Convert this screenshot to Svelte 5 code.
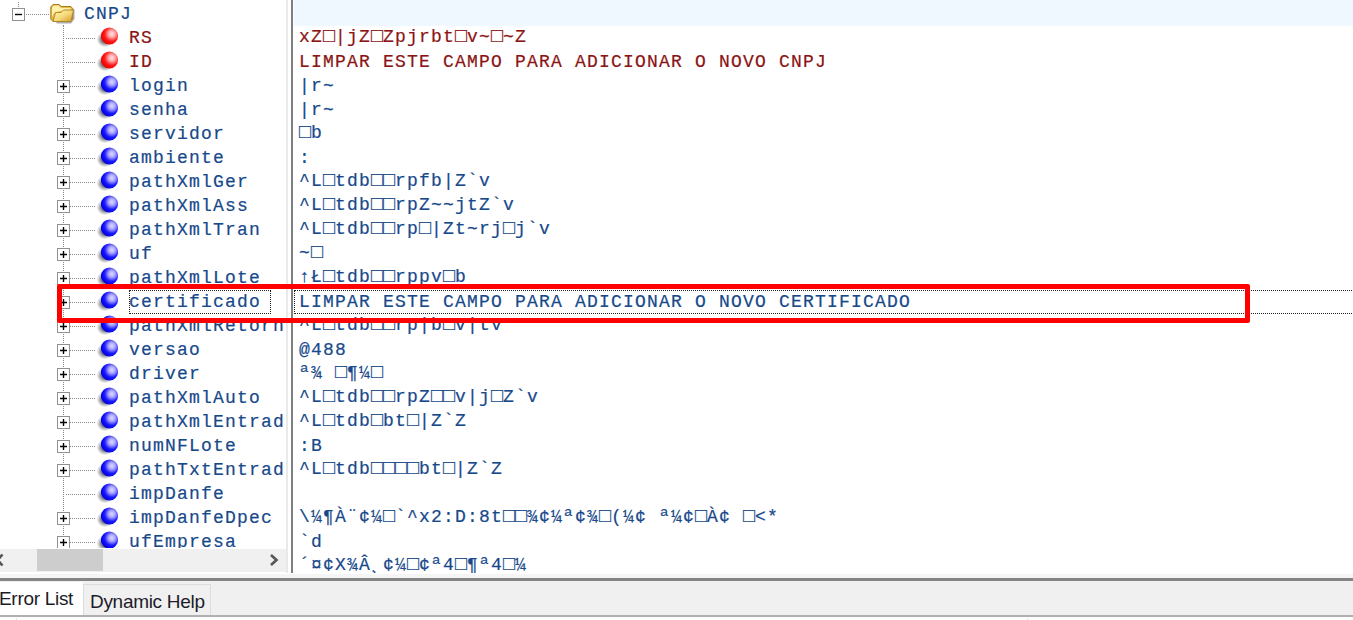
<script>
  // red = plain values, leaf = node without an expand box
  const rows = [
    { name: "RS", value: "xZ□|jZ□Zpjrbt□v~□~Z", red: true, leaf: true },
    { name: "ID", value: "LIMPAR ESTE CAMPO PARA ADICIONAR O NOVO CNPJ", red: true, leaf: true },
    { name: "login", value: "|r~" },
    { name: "senha", value: "|r~" },
    { name: "servidor", value: "□b" },
    { name: "ambiente", value: ":" },
    { name: "pathXmlGer", value: "^L□tdb□□rpfb|Z`v" },
    { name: "pathXmlAss", value: "^L□tdb□□rpZ~~jtZ`v" },
    { name: "pathXmlTran", value: "^L□tdb□□rp□|Zt~rj□j`v" },
    { name: "uf", value: "~□" },
    { name: "pathXmlLote", value: "↑Ł□tdb□□rppv□b" },
    { name: "certificado", value: "LIMPAR ESTE CAMPO PARA ADICIONAR O NOVO CERTIFICADO", selected: true },
    { name: "pathXmlRetorn", value: "^L□tdb□□rp|b□v|tv" },
    { name: "versao", value: "@488" },
    { name: "driver", value: "ª¾ □¶¼□" },
    { name: "pathXmlAuto", value: "^L□tdb□□rpZ□□v|j□Z`v" },
    { name: "pathXmlEntrad", value: "^L□tdb□bt□|Z`Z" },
    { name: "numNFLote", value: ":B" },
    { name: "pathTxtEntrad", value: "^L□tdb□□□□bt□|Z`Z" },
    { name: "impDanfe", value: "", leaf: true },
    { name: "impDanfeDpec", value: "\\¼¶À¨¢¼□`^x2:D:8t□□¾¢¼ª¢¾□(¼¢ ª¼¢□À¢ □<*" },
    { name: "ufEmpresa", value: "`d" }
  ];
  const lastValue = "´¤¢X¾Â¸¢¼□¢ª4□¶ª4□¼";
</script>

{#snippet chars(text)}{#each text.split(/(□)/) as part}{#if part === "□"}<span class="box">□</span>{:else}{part}{/if}{/each}{/snippet}

<svg class="defs" width="0" height="0">
  <defs>
    <radialGradient id="blueBall" cx="0.64" cy="0.38" r="0.65">
      <stop offset="0" stop-color="#dcdaff" />
      <stop offset="0.3" stop-color="#aaa6ff" />
      <stop offset="0.66" stop-color="#1c18ff" />
      <stop offset="1" stop-color="#0000e4" />
    </radialGradient>
    <radialGradient id="redBall" cx="0.64" cy="0.38" r="0.65">
      <stop offset="0" stop-color="#ffe2e2" />
      <stop offset="0.3" stop-color="#ffa8a8" />
      <stop offset="0.66" stop-color="#ff1818" />
      <stop offset="1" stop-color="#f00000" />
    </radialGradient>
    <radialGradient id="ballShadow">
      <stop offset="0.45" stop-color="#555" stop-opacity="0.75" />
      <stop offset="1" stop-color="#888" stop-opacity="0" />
    </radialGradient>
    <linearGradient id="folderFront" x1="0" y1="0" x2="1" y2="1">
      <stop offset="0" stop-color="#fff6bd" />
      <stop offset="0.5" stop-color="#f6db7c" />
      <stop offset="1" stop-color="#d39c22" />
    </linearGradient>
  </defs>
</svg>

<div class="window">
  <div class="panes">
    <div class="tree">
      <div class="nodes">
        <div class="row">
          <svg width="84" height="24">
            <path class="dots" d="M18.500 -2V5M26 12.500H50M63.500 23V24" />
            <rect class="toggle" x="12.500" y="6.500" width="12" height="12" />
            <path class="sign" d="M15 12.500H22" />
            <path d="M54 18L57 21.500H71L74.500 17V8L73 6V17L71 19Z" fill="#777" opacity="0.6" />
            <path d="M50.800 17V5L53 2.500H59L61.500 4.500H71L72.500 6.500V17L70 19.500H53Z" fill="#e2bb4b" stroke="#a77a20" />
            <path d="M52 15V5.500L54 3.500H58.500L61 6H70.500V9H60L54 11Z" fill="#fff1aa" />
            <path d="M53 19.500L55.500 10.500H61L63.500 8H73.500L71 19.500Z" fill="url(#folderFront)" stroke="#b48624" />
          </svg>
          <span class="name">CNPJ</span>
        </div>
        {#each rows as row}
          <div class="row" class:red={row.red}>
            <svg width="129" height="24">
              <path class="dots" d="M63.500 0V24M66 12.500H95" />
              {#if !row.leaf}
                <rect class="toggle" x="57.500" y="6.500" width="12" height="12" />
                <path class="sign" d="M60 12.500H67M63.500 9V16" />
              {/if}
              <ellipse cx="105" cy="13.500" rx="8.500" ry="8" fill="url(#ballShadow)" />
              <circle cx="109.500" cy="10" r="8.600" fill={row.red ? "url(#redBall)" : "url(#blueBall)"} />
            </svg>
            <span class="name" class:focus={row.selected}>{row.name}</span>
          </div>
        {/each}
      </div>
      <div class="scrollbar">
        <svg width="37" height="22"><path class="arrow" d="M2.500 5.500L-2.500 11L2.500 16.500" /></svg>
        <div class="thumb"></div>
        <svg width="183" height="22"><path class="arrow" d="M168 6L173.500 11L168 16" /></svg>
      </div>
    </div>
    <div class="splitter"></div>
    <div class="values">
      <div class="head"></div>
      {#each rows as row}
        <div class="value" class:red={row.red} class:selected={row.selected} class:raised={/[□¼]/.test(row.value)}><span>{@render chars(row.value)}</span></div>
      {/each}
      <div class="value raised"><span>{@render chars(lastValue)}</span></div>
    </div>
    <div class="highlight"></div>
  </div>
  <div class="tabs">
    <div class="tab active"><span>Error List</span></div>
    <div class="tab"><span>Dynamic Help</span></div>
  </div>
  <div class="footer"></div>
</div>

<style>
  :global(body) {
    margin: 0;
    background: #fff;
    overflow: hidden;
  }
  .defs {
    display: block;
  }
  .window {
    width: 1353px;
    height: 620px;
    display: flex;
    flex-direction: column;
    overflow: hidden;
    background: #fff;
    font-family: "Liberation Mono", "Courier New", monospace;
    font-size: 18px;
    letter-spacing: 1.2px;
    color: #17498a;
    -webkit-text-stroke: 0.2px currentColor;
  }
  .panes {
    position: relative;
    display: flex;
    height: 573px;
  }
  .tree {
    width: 286px;
    display: flex;
    flex-direction: column;
  }
  .nodes {
    height: 546px;
    padding-top: 2px;
    overflow: hidden;
  }
  .row {
    display: flex;
    height: 24px;
    line-height: 24px;
    white-space: pre;
  }
  .row svg {
    flex: none;
  }
  .name {
    height: 23px;
  }
  .red {
    color: #8b1414;
  }
  .focus {
    width: 142px;
    height: 24px;
    box-sizing: border-box;
    outline: 1px dotted #222;
    outline-offset: -1px;
  }
  .dots {
    fill: none;
    stroke: #888;
    stroke-dasharray: 1 1;
  }
  .toggle {
    fill: #fff;
    stroke: #919191;
  }
  .sign {
    fill: none;
    stroke: #000;
    stroke-width: 1.4;
  }
  .scrollbar {
    display: flex;
    height: 23px;
    margin-top: 1px;
    background: #f0f0f0;
  }
  .scrollbar svg {
    flex: none;
  }
  .thumb {
    width: 66px;
    height: 22px;
    background: #cdcdcd;
  }
  .arrow {
    fill: none;
    stroke: #555;
    stroke-width: 2.6;
  }
  .splitter {
    width: 3px;
    margin-right: 1px;
    border-left: 2px solid #e9e9e9;
    border-right: 2px solid #7e7e7e;
  }
  .values {
    flex: 1;
    overflow: hidden;
  }
  .head {
    height: 26px;
    background: #eff7ff;
  }
  .value {
    height: 24px;
    line-height: 24px;
    padding-left: 5px;
    white-space: pre;
  }
  .raised {
    line-height: 22px;
  }
  .value span {
    display: inline-block;
    vertical-align: top;
  }
  .value .box {
    width: 12px;
    font-size: 20px;
    letter-spacing: 0;
    text-align: center;
  }
  .selected {
    margin-right: -3px;
    outline: 1px dotted #222;
    outline-offset: -1px;
  }
  .highlight {
    position: absolute;
    left: 57px;
    top: 284px;
    width: 1183px;
    height: 29px;
    border: 5px solid #f00;
    border-radius: 2px;
  }
  .tabs {
    display: flex;
    height: 33px;
    margin-top: 5px;
    padding-top: 1px;
    border-top: 3px solid #858585;
    border-bottom: 2px solid #b0b0b0;
    background: #f0f0f0;
    box-shadow: 0 -4px 0 #f5f5f5;
    font-family: "Liberation Sans", Arial, sans-serif;
    font-size: 19px;
    letter-spacing: -0.3px;
    color: #1c1c28;
    -webkit-text-stroke: 0;
  }
  .tab {
    width: 128px;
    height: 31px;
    margin-top: 2px;
    line-height: 33px;
    border: 1px solid #dcdcdc;
    border-bottom: 0;
    box-sizing: border-box;
    white-space: nowrap;
  }
  .tab span {
    display: block;
    margin-left: 6px;
  }
  .active {
    width: 83px;
    height: 33px;
    margin-top: 0;
    border: 0;
    background: #fff;
  }
  .active span {
    margin-left: -1px;
  }
  .footer {
    height: 2px;
    margin: 1px 0 0 16px;
    width: 1010px;
    border-left: 1px solid #e4e4e4;
    border-right: 1px solid #e4e4e4;
  }
</style>
